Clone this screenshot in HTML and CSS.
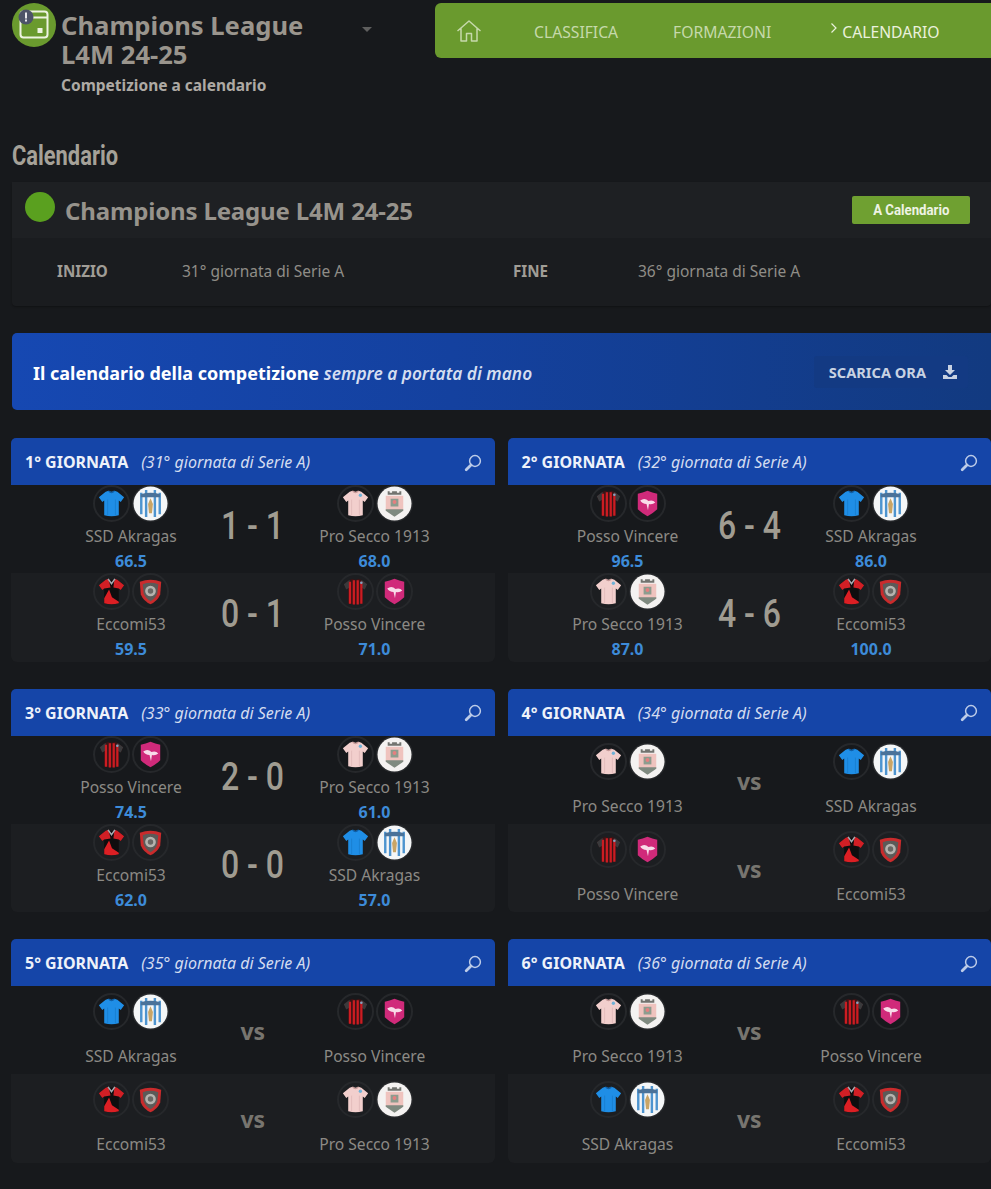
FILE: index.html
```html
<!DOCTYPE html>
<html lang="it">
<head>
<meta charset="utf-8">
<title>Calendario</title>
<link rel="stylesheet" href="styles.css">
</head>
<body>
<svg class="defs" width="0" height="0" aria-hidden="true">
  <defs>
    <symbol id="search" viewBox="0 0 18 18"><circle cx="11" cy="7" r="5.4" fill="none" stroke="currentColor" stroke-width="1.5"/><path d="M7 11 L2.2 15.8" fill="none" stroke="currentColor" stroke-width="2.8" stroke-linecap="round"/></symbol>
    <symbol id="j-blue" viewBox="0 0 36 36"><path d="M12 6 L15 5 Q18 7 21 5 L24 6 L31 11.5 L27.5 16.5 L25.5 15 L25.5 30 Q18 32 10.5 30 L10.5 15 L8.5 16.5 L5 11.5 Z" fill="#1f8ee6"/><path d="M15 5 Q18 8.5 21 5" fill="none" stroke="#0f5fa8" stroke-width="1.2"/><path d="M14 30.5 V14 M22 30.5 V14" stroke="#1a7fd0" stroke-width="1"/></symbol>
    <symbol id="j-pink" viewBox="0 0 36 36"><path d="M12 6 L15 5 Q18 7 21 5 L24 6 L31 11.5 L27.5 16.5 L25.5 15 L25.5 30 Q18 32 10.5 30 L10.5 15 L8.5 16.5 L5 11.5 Z" fill="#f2cfcd"/><circle cx="23" cy="9.5" r="1.7" fill="#6fb2d8"/><path d="M15 5 Q18 8.5 21 5" fill="none" stroke="#c79a99" stroke-width="1.2"/><path d="M14 30.5 V14 M22 30.5 V14" stroke="#e2bcbb" stroke-width="1"/></symbol>
    <symbol id="j-stripes" viewBox="0 0 36 36"><path d="M12 6 L15 5 Q18 7 21 5 L24 6 L30 10.5 L27.5 16 L25.5 14.5 L25.5 30 Q18 32 10.5 30 L10.5 14.5 L8.5 16 L6 10.5 Z" fill="#3b1416"/><path d="M6 10.5 L12 6 L12 14 L8.5 16 Z M30 10.5 L24 6 L24 14 L27.5 16 Z" fill="#3a3a3c"/><path d="M12.3 8 V30.5 M16.3 6.5 V31.3 M20.3 6.5 V31.3 M24 8 V30.5" fill="none" stroke="#cc1c22" stroke-width="2.3"/><circle cx="24" cy="9" r="1.3" fill="#7fa6c2"/></symbol>
    <symbol id="j-red" viewBox="0 0 36 36"><path d="M12 6 L15 5 Q18 7 21 5 L24 6 L31 11.5 L27.5 16.5 L25.5 15 L25.5 30 Q18 32 10.5 30 L10.5 15 L8.5 16.5 L5 11.5 Z" fill="#0f0d0e"/><path d="M5 11.5 L12 6 L15 5 L17 14 L10.5 15 L8.5 16.5 Z M21 5 L24 6 L31 11.5 L27.5 16.5 L25.5 15 L20 14 Z" fill="#d21f25"/><path d="M10.5 30 L10.5 25 L15.5 16 L18.5 24 L25.5 28.5 L25.5 30 Q18 32 10.5 30 Z" fill="#dc1f24"/><path d="M14.5 5 L18 10 L21.5 5" fill="none" stroke="#a4aab0" stroke-width="1.6"/></symbol>
    <symbol id="c-akragas" viewBox="0 0 36 36"><circle cx="18" cy="18" r="17.5" fill="#f4f6f7"/><path d="M8.5 7 V29 M13.5 4 V32 M22.5 4 V32 M27.5 7 V29" fill="none" stroke="#4d94cf" stroke-width="2.5"/><path d="M8 8.5 Q18 5.5 28 8.5 V11.5 H8 Z" fill="#4a7299"/><path d="M18 12.5 L20.5 18.5 L19.5 28 H16.5 L15.5 18.5 Z" fill="#c9a566"/></symbol>
    <symbol id="c-prosecco" viewBox="0 0 36 36"><circle cx="18" cy="18" r="17.5" fill="#f4f2f1"/><path d="M11 9 V5.5 H13 V7 H15.5 V5.5 H20.5 V7 H23 V5.5 H25 V9 Z" fill="#72736f"/><path d="M9 10 H27 V25 L18 31 L9 25 Z" fill="#efc3be"/><path d="M9 24 H27 V25.5 L18 31.5 L9 25.5 Z" fill="#7f8a80"/><path d="M14 13 H22 V21 H14 Z" fill="#8d9c8e"/><circle cx="18" cy="16.5" r="2" fill="#e57f7f"/></symbol>
    <symbol id="c-eccomi" viewBox="0 0 36 36"><path d="M7 8 Q18 4 29 8 L28 21 Q25 28 18 31 Q11 28 8 21 Z" fill="#c92b2c"/><path d="M10 10.5 Q18 7.5 26 10.5 L25 20 Q23 25 18 28 Q13 25 11 20 Z" fill="#5c5a58"/><circle cx="18" cy="17.5" r="5.5" fill="#b5b3ae"/><circle cx="18" cy="17.5" r="2.8" fill="#6a6865"/></symbol>
    <symbol id="c-posso" viewBox="0 0 36 36"><path d="M8 8 Q13 7 18 5 Q23 7 28 8 V24 Q24 28 18 31 Q12 28 8 24 Z" fill="#d02a7a"/><path d="M10.5 15 Q15 11.5 19 15.5 Q23.5 14 26 17 Q23 19.5 19.5 18.5 L18.5 25 L17 18.5 Q12.5 18.5 10.5 15 Z" fill="#f8dce9"/></symbol>
  </defs>
</svg>

<header class="top">
  <div class="brand">
    <div class="brand-icon">
      <svg viewBox="0 0 44 44" width="44" height="44"><circle cx="22" cy="22" r="22" fill="#6a9a2e"/><rect x="8.5" y="8.5" width="27" height="26" rx="3" fill="none" stroke="#eef3e2" stroke-width="2"/><path d="M9 14.5 H35" stroke="#eef3e2" stroke-width="2"/><rect x="25.5" y="25" width="5" height="5" fill="#eef3e2"/><circle cx="14" cy="14" r="7.5" fill="#4d5368"/><rect x="13" y="9.5" width="2" height="6" fill="#e8e8ec"/><rect x="13" y="16.5" width="2" height="2" fill="#e8e8ec"/></svg>
    </div>
    <div class="brand-text">
      <h1 class="brand-title">Champions League<br>L4M 24-25</h1>
      <p class="brand-sub">Competizione a calendario</p>
    </div>
    <span class="caret"></span>
  </div>
  <nav class="nav">
    <svg class="nav-home" viewBox="0 0 26 24" width="26" height="24"><path d="M1.5 12 L13 2 L24.5 12 M5 9.5 V22 H10.5 V14.5 H15.5 V22 H21 V9.5" fill="none" stroke="currentColor" stroke-width="1.5" stroke-linejoin="round"/></svg>
    <a class="nav-link nav-first">CLASSIFICA</a>
    <a class="nav-link nav-second">FORMAZIONI</a>
    <a class="nav-link nav-active"><svg class="nav-chevron" viewBox="0 0 8 12" width="8" height="12"><path d="M1.5 1.5 L6 6 L1.5 10.5" fill="none" stroke="currentColor" stroke-width="1.2"/></svg>CALENDARIO</a>
  </nav>
</header>

<h2 class="page-title"><span class="page-title-text">Calendario</span></h2>

<section class="info">
  <div class="info-head">
    <span class="info-dot"></span>
    <h3 class="info-title">Champions League L4M 24-25</h3>
    <a class="info-btn"><span class="info-btn-text">A Calendario</span></a>
  </div>
  <div class="info-body">
    <b class="info-k1">INIZIO</b><span class="info-v1">31° giornata di Serie A</span>
    <b class="info-k2">FINE</b><span class="info-v2">36° giornata di Serie A</span>
  </div>
</section>

<section class="banner">
  <p class="banner-text"><b>Il calendario della competizione</b> <em>sempre a portata di mano</em></p>
  <a class="banner-btn">SCARICA ORA
    <svg viewBox="0 0 16 16" width="16" height="16"><path d="M6 1 H10 V6 H13 L8 11 L3 6 H6 Z M1 11 H4.5 L6.5 13 H9.5 L11.5 11 H15 V15 H1 Z" fill="currentColor"/></svg>
  </a>
</section>

<main class="grid">

  <article class="day">
    <header class="day-head"><b>1° GIORNATA</b><em>(31° giornata di Serie A)</em><svg class="day-search"><use href="#search"/></svg></header>
    <div class="match">
      <div class="team"><div class="crests"><span class="crest"><svg><use href="#j-blue"/></svg></span><span class="crest"><svg><use href="#c-akragas"/></svg></span></div><div class="team-name">SSD Akragas</div><div class="team-pts">66.5</div></div>
      <div class="score"><span>1 - 1</span></div>
      <div class="team"><div class="crests"><span class="crest"><svg><use href="#j-pink"/></svg></span><span class="crest"><svg><use href="#c-prosecco"/></svg></span></div><div class="team-name">Pro Secco 1913</div><div class="team-pts">68.0</div></div>
    </div>
    <div class="match">
      <div class="team"><div class="crests"><span class="crest"><svg><use href="#j-red"/></svg></span><span class="crest"><svg><use href="#c-eccomi"/></svg></span></div><div class="team-name">Eccomi53</div><div class="team-pts">59.5</div></div>
      <div class="score"><span>0 - 1</span></div>
      <div class="team"><div class="crests"><span class="crest"><svg><use href="#j-stripes"/></svg></span><span class="crest"><svg><use href="#c-posso"/></svg></span></div><div class="team-name">Posso Vincere</div><div class="team-pts">71.0</div></div>
    </div>
  </article>

  <article class="day">
    <header class="day-head"><b>2° GIORNATA</b><em>(32° giornata di Serie A)</em><svg class="day-search"><use href="#search"/></svg></header>
    <div class="match">
      <div class="team"><div class="crests"><span class="crest"><svg><use href="#j-stripes"/></svg></span><span class="crest"><svg><use href="#c-posso"/></svg></span></div><div class="team-name">Posso Vincere</div><div class="team-pts">96.5</div></div>
      <div class="score"><span>6 - 4</span></div>
      <div class="team"><div class="crests"><span class="crest"><svg><use href="#j-blue"/></svg></span><span class="crest"><svg><use href="#c-akragas"/></svg></span></div><div class="team-name">SSD Akragas</div><div class="team-pts">86.0</div></div>
    </div>
    <div class="match">
      <div class="team"><div class="crests"><span class="crest"><svg><use href="#j-pink"/></svg></span><span class="crest"><svg><use href="#c-prosecco"/></svg></span></div><div class="team-name">Pro Secco 1913</div><div class="team-pts">87.0</div></div>
      <div class="score"><span>4 - 6</span></div>
      <div class="team"><div class="crests"><span class="crest"><svg><use href="#j-red"/></svg></span><span class="crest"><svg><use href="#c-eccomi"/></svg></span></div><div class="team-name">Eccomi53</div><div class="team-pts">100.0</div></div>
    </div>
  </article>

  <article class="day">
    <header class="day-head"><b>3° GIORNATA</b><em>(33° giornata di Serie A)</em><svg class="day-search"><use href="#search"/></svg></header>
    <div class="match">
      <div class="team"><div class="crests"><span class="crest"><svg><use href="#j-stripes"/></svg></span><span class="crest"><svg><use href="#c-posso"/></svg></span></div><div class="team-name">Posso Vincere</div><div class="team-pts">74.5</div></div>
      <div class="score"><span>2 - 0</span></div>
      <div class="team"><div class="crests"><span class="crest"><svg><use href="#j-pink"/></svg></span><span class="crest"><svg><use href="#c-prosecco"/></svg></span></div><div class="team-name">Pro Secco 1913</div><div class="team-pts">61.0</div></div>
    </div>
    <div class="match">
      <div class="team"><div class="crests"><span class="crest"><svg><use href="#j-red"/></svg></span><span class="crest"><svg><use href="#c-eccomi"/></svg></span></div><div class="team-name">Eccomi53</div><div class="team-pts">62.0</div></div>
      <div class="score"><span>0 - 0</span></div>
      <div class="team"><div class="crests"><span class="crest"><svg><use href="#j-blue"/></svg></span><span class="crest"><svg><use href="#c-akragas"/></svg></span></div><div class="team-name">SSD Akragas</div><div class="team-pts">57.0</div></div>
    </div>
  </article>

  <article class="day">
    <header class="day-head"><b>4° GIORNATA</b><em>(34° giornata di Serie A)</em><svg class="day-search"><use href="#search"/></svg></header>
    <div class="match match-open">
      <div class="team"><div class="crests"><span class="crest"><svg><use href="#j-pink"/></svg></span><span class="crest"><svg><use href="#c-prosecco"/></svg></span></div><div class="team-name">Pro Secco 1913</div></div>
      <div class="score score-vs"><span>vs</span></div>
      <div class="team"><div class="crests"><span class="crest"><svg><use href="#j-blue"/></svg></span><span class="crest"><svg><use href="#c-akragas"/></svg></span></div><div class="team-name">SSD Akragas</div></div>
    </div>
    <div class="match match-open">
      <div class="team"><div class="crests"><span class="crest"><svg><use href="#j-stripes"/></svg></span><span class="crest"><svg><use href="#c-posso"/></svg></span></div><div class="team-name">Posso Vincere</div></div>
      <div class="score score-vs"><span>vs</span></div>
      <div class="team"><div class="crests"><span class="crest"><svg><use href="#j-red"/></svg></span><span class="crest"><svg><use href="#c-eccomi"/></svg></span></div><div class="team-name">Eccomi53</div></div>
    </div>
  </article>

  <article class="day">
    <header class="day-head"><b>5° GIORNATA</b><em>(35° giornata di Serie A)</em><svg class="day-search"><use href="#search"/></svg></header>
    <div class="match match-open">
      <div class="team"><div class="crests"><span class="crest"><svg><use href="#j-blue"/></svg></span><span class="crest"><svg><use href="#c-akragas"/></svg></span></div><div class="team-name">SSD Akragas</div></div>
      <div class="score score-vs"><span>vs</span></div>
      <div class="team"><div class="crests"><span class="crest"><svg><use href="#j-stripes"/></svg></span><span class="crest"><svg><use href="#c-posso"/></svg></span></div><div class="team-name">Posso Vincere</div></div>
    </div>
    <div class="match match-open">
      <div class="team"><div class="crests"><span class="crest"><svg><use href="#j-red"/></svg></span><span class="crest"><svg><use href="#c-eccomi"/></svg></span></div><div class="team-name">Eccomi53</div></div>
      <div class="score score-vs"><span>vs</span></div>
      <div class="team"><div class="crests"><span class="crest"><svg><use href="#j-pink"/></svg></span><span class="crest"><svg><use href="#c-prosecco"/></svg></span></div><div class="team-name">Pro Secco 1913</div></div>
    </div>
  </article>

  <article class="day">
    <header class="day-head"><b>6° GIORNATA</b><em>(36° giornata di Serie A)</em><svg class="day-search"><use href="#search"/></svg></header>
    <div class="match match-open">
      <div class="team"><div class="crests"><span class="crest"><svg><use href="#j-pink"/></svg></span><span class="crest"><svg><use href="#c-prosecco"/></svg></span></div><div class="team-name">Pro Secco 1913</div></div>
      <div class="score score-vs"><span>vs</span></div>
      <div class="team"><div class="crests"><span class="crest"><svg><use href="#j-stripes"/></svg></span><span class="crest"><svg><use href="#c-posso"/></svg></span></div><div class="team-name">Posso Vincere</div></div>
    </div>
    <div class="match match-open">
      <div class="team"><div class="crests"><span class="crest"><svg><use href="#j-blue"/></svg></span><span class="crest"><svg><use href="#c-akragas"/></svg></span></div><div class="team-name">SSD Akragas</div></div>
      <div class="score score-vs"><span>vs</span></div>
      <div class="team"><div class="crests"><span class="crest"><svg><use href="#j-red"/></svg></span><span class="crest"><svg><use href="#c-eccomi"/></svg></span></div><div class="team-name">Eccomi53</div></div>
    </div>
  </article>

</main>
</body>
</html>
```
FILE: styles.css
```css
* { box-sizing: border-box; }
html, body { margin: 0; padding: 0; }
body {
  width: 991px;
  height: 1189px;
  overflow: hidden;
  background: #17191c;
  font-family: "Noto Sans", "Open Sans", sans-serif;
  color: #96938c;
}
.defs { display: block; height: 0; }

.top { display: flex; height: 128px; padding-top: 3px; }
.brand { display: flex; width: 435px; padding-left: 12px; flex: none; }
.brand-icon { width: 44px; height: 44px; flex: none; margin-right: 5px; }
.brand-text { width: 290px; padding-top: 8px; }
.brand-title { margin: 0; font-size: 25.6px; line-height: 29px; font-weight: 700; color: #9a958d; }
.brand-sub { margin: 6px 0 0; font-size: 15.5px; line-height: 20px; font-weight: 700; color: #aeaaa4; }
.caret { width: 0; height: 0; margin: 24px 0 0 11px; border-style: solid; border-width: 5px 5px 0; border-color: #5f5f5e transparent transparent; }

.nav { flex: 1; height: 55px; display: flex; align-items: center; padding-left: 21px; background: #6a9a2e; border-radius: 6px 0 0 6px; color: #c6d9ab; }
.nav-home { flex: none; margin-right: 52px; }
.nav-link { font-size: 15.7px; line-height: 20px; white-space: nowrap; position: relative; top: 1px; }
.nav-first { margin-right: 55px; }
.nav-second { margin-right: 59px; }
.nav-active { color: #eaf1dd; display: flex; align-items: center; }
.nav-chevron { margin: -8px 4px 0 0; }

.page-title { margin: 0 0 8px 12px; height: 46px; padding-top: 10px; font-family: Roboto, "Liberation Sans", sans-serif; font-size: 27px; line-height: 36px; font-weight: 700; color: #a5a198; }
.page-title-text { display: inline-block; transform: scaleX(.81); transform-origin: left center; }

.info { margin: 0 0 27px 12px; height: 124px; background: #1a1c1f; border-radius: 4px; box-shadow: 0 1px 2px rgba(0,0,0,.3); }
.info-head { height: 56px; display: flex; align-items: center; padding: 0 21px 0 13px; background: #1e2023; }
.info-dot { width: 30px; height: 30px; border-radius: 50%; background: #5aa01f; flex: none; margin: -6px 10px 0 0; }
.info-title { flex: 1; margin: 0; padding-top: 2px; font-size: 24px; line-height: 32px; font-weight: 700; letter-spacing: -.16px; color: #97938c; }
.info-btn { width: 118px; height: 28px; line-height: 28px; text-align: center; background: #6fa031; border-radius: 2px; font-family: Roboto, "Liberation Sans", sans-serif; font-weight: 700; font-size: 15px; color: #eef3e4; }
.info-btn-text { display: inline-block; transform: scaleX(.88); }
.info-body { display: flex; align-items: center; height: 66px; font-size: 15.5px; padding: 0 0 0 45px; color: #8f8d87; }
.info-k1 { width: 125px; font-size: 15.2px; color: #a09d96; }
.info-v1 { width: 331px; }
.info-k2 { width: 125px; font-size: 15.2px; color: #a09d96; }

.banner { margin: 0 0 28px 12px; height: 77px; display: flex; align-items: center; justify-content: space-between; padding: 2px 23px 0 21px; border-radius: 5px 0 0 5px; background: linear-gradient(90deg, #1648b2 0%, #14419f 45%, #123a80 100%); color: #fff; }
.banner-text { margin: 0; font-size: 18px; }
.banner-text b { font-weight: 700; }
.banner-text em { font-size: 17.3px; font-weight: 600; color: #d5def0; }
.banner-btn { display: flex; align-items: center; gap: 16px; height: 32px; padding: 0 10px 0 15px; background: #133a83; border-radius: 3px; font-size: 14.6px; font-weight: 700; color: #c8d2e2; margin-top: -2px; }

.grid { display: grid; grid-template-columns: 1fr 1fr; column-gap: 13px; row-gap: 27px; padding-left: 11px; }
.day { border-radius: 5px 5px 6px 6px; overflow: hidden; background: #17191c; }
.day-head { height: 47px; display: flex; align-items: center; padding: 1px 13px 0 14px; background: #1545a8; color: #e7ecf6; }
.day-head b { font-size: 16px; font-weight: 700; margin-right: 13px; color: #eef2fa; }
.day-head em { flex: 1; font-size: 16px; color: #d3dcf0; }
.day-search { width: 18px; height: 18px; flex: none; color: #bccbe8; margin-top: 1px; }

.match { display: flex; height: 88.3px; background: #17191c; }
.match + .match { background: #1c1e21; }
.team { width: 240px; flex: none; text-align: center; }
.crests { display: flex; justify-content: center; gap: 2px; height: 37px; }
.crest { width: 37px; height: 37px; border-radius: 50%; border: 2px solid #26282b; flex: none; }
.crest svg { display: block; width: 35px; height: 35px; margin: -1px; }
.team-name { margin-top: 4px; font-size: 15.6px; line-height: 20px; color: #8c8a85; white-space: nowrap; }
.team-pts { margin-top: 5px; font-size: 16px; line-height: 20px; font-weight: 700; color: #3d8bd8; }
.match-open .crests { margin-top: 7px; }
.match-open .team-name { margin-top: 16px; }

.score { flex: 1; min-width: 0; display: flex; justify-content: center; padding-top: 18px; white-space: nowrap; font-family: Roboto, "Liberation Sans", sans-serif; font-size: 39px; line-height: 46px; font-weight: 500; color: #a09c91; }
.score > span { flex: none; transform: scaleX(.82); }
.score-vs { padding-top: 31px; font-family: "Noto Sans", sans-serif; font-size: 23px; line-height: 28px; font-weight: 700; color: #77756f; }
.score-vs > span { transform: none; }
```
